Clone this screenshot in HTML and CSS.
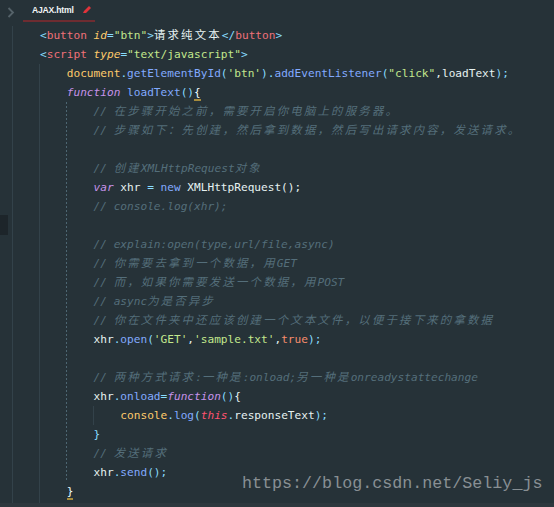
FILE: index.html
```html
<!DOCTYPE html>
<html>
<head>
<meta charset="utf-8">
<link rel="stylesheet" href="styles.css">
</head>
<body>
<div class="editor">
  <div class="tabbar">
    <svg class="chev" width="8" height="11" viewBox="0 0 8 11"><path d="M1.5 1 L6 5.5 L1.5 10" fill="none" stroke="#55636a" stroke-width="1.8"/></svg>
    <div class="tab">
      <span class="tabname">AJAX.html</span>
      <svg class="pencil" width="10" height="9" viewBox="0 0 10 9"><path d="M1 8 L2 6 L7 1 L9 3 L4 8 Z" fill="#e0333a"/></svg>
    </div>
  </div>
  <div class="codewrap">
    <div class="guide g0"></div>
    <div class="guide g1"></div>
    <div class="guide g2"></div>
    <div class="guide g3"></div>
    <div class="curline"></div>
<pre class="code">    <span class="p">&lt;</span><span class="tg">button</span> <span class="at">id</span><span class="p">=</span><span class="s">"btn"</span><span class="p">&gt;</span><span class="cj">请求纯文本</span><span class="p">&lt;/</span><span class="tg">button</span><span class="p">&gt;</span>
    <span class="p">&lt;</span><span class="tg">script</span> <span class="at">type</span><span class="p">=</span><span class="s">"text/javascript"</span><span class="p">&gt;</span>
        <span class="v">document</span><span class="p">.</span><span class="f">getElementById</span><span class="p">(</span><span class="s">'btn'</span><span class="p">).</span><span class="f">addEventListener</span><span class="p">(</span><span class="s">"click"</span>,loadText<span class="p">);</span>
        <span class="k">function</span> <span class="f">loadText</span><span class="p">()</span><span class="br">{</span>
            <span class="c">// <span class="cj">在步骤开始之前，需要开启你电脑上的服务器。</span></span>
            <span class="c">// <span class="cj">步骤如下：先创建，然后拿到数据，然后写出请求内容，发送请求。</span></span>

            <span class="c">// <span class="cj">创建</span>XMLHttpRequest<span class="cj">对象</span></span>
            <span class="k">var</span> xhr <span class="p">=</span> <span class="f">new</span> XMLHttpRequest();
            <span class="c">// console.log(xhr);</span>

            <span class="c">// explain:open(type,url/file,async)</span>
            <span class="c">// <span class="cj">你需要去拿到一个数据，用</span>GET</span>
            <span class="c">// <span class="cj">而，如果你需要发送一个数据，用</span>POST</span>
            <span class="c">// async<span class="cj">为是否异步</span></span>
            <span class="c">// <span class="cj">你在文件夹中还应该创建一个文本文件，以便于接下来的拿数据</span></span>
            xhr<span class="p">.</span><span class="f">open</span><span class="p">(</span><span class="s">'GET'</span>,<span class="s">'sample.txt'</span>,<span class="n">true</span><span class="p">);</span>

            <span class="c">// <span class="cj">两种方式请求</span>:<span class="cj">一种是</span>:onload;<span class="cj">另一种是</span>onreadystattechange</span>
            xhr<span class="p">.</span><span class="f">onload</span><span class="p">=</span><span class="k">function</span><span class="p">()</span>{
                <span class="v">console</span><span class="p">.</span><span class="f">log</span><span class="p">(</span><span class="th">this</span><span class="p">.</span>responseText<span class="p">);</span>
            <span class="p">}</span>
            <span class="c">// <span class="cj">发送请求</span></span>
            xhr<span class="p">.</span><span class="f">send</span><span class="p">();</span>
        <span class="br">}</span></pre>
    <div class="watermark">https://blog.csdn.net/Seliy_js</div>
  </div>
  <div class="bottom"></div>
</div>
</body>
</html>
```
FILE: styles.css
```css
html, body {
  margin: 0;
  padding: 0;
  background: #263238;
}
.editor {
  width: 554px;
  height: 507px;
  overflow: hidden;
  background: #263238;
  display: flex;
  flex-direction: column;
}
.tabbar {
  height: 26px;
  flex: none;
  display: flex;
  align-items: flex-start;
}
.chev {
  margin: 7px 0 0 7px;
}
.tab {
  margin-left: 8px;
  width: 72px;
  height: 22px;
  border-bottom: 2px solid #6e2c31;
  display: flex;
  align-items: center;
  padding-left: 9px;
  box-sizing: border-box;
}
.tabname {
  font-family: "Liberation Sans", Arial, sans-serif;
  font-weight: bold;
  font-size: 8.6px;
  color: #f2f5f6;
  letter-spacing: -0.2px;
  margin-top: -1px;
}
.pencil {
  margin-left: 8px;
  margin-top: -1px;
}
.codewrap {
  position: relative;
  flex: 1;
}
.code {
  margin: 0;
  padding: 0 0 0 13.2px;
  font-family: "DejaVu Sans Mono", "Noto Sans CJK SC", monospace;
  font-size: 11.13px;
  line-height: 19px;
  color: #e6f2f2;
  white-space: pre;
  position: relative;
}
.cj {
  font-family: "Noto Sans CJK SC", sans-serif;
  font-size: 11.4px;
  line-height: 10px;
  letter-spacing: 2.2px;
}
.p { color: #89ddff; }
.tg { color: #f07178; }
.at { color: #ffcb6b; font-style: italic; }
.s { color: #c3e88d; }
.v { color: #ffcb6b; }
.f { color: #82aaff; }
.k { color: #c792ea; font-style: italic; }
.n { color: #f78c6c; }
.th { color: #ff5370; font-style: italic; }
.c { color: #546e7a; font-style: italic; }
.br {
  color: #eeffff;
  border-bottom: 2px solid #a68b3c;
}
.guide {
  position: absolute;
  width: 1px;
}
.g0 {
  left: 12px;
  top: 0;
  bottom: 0;
  background: #33424a;
}
.g1 {
  left: 39px;
  top: 38px;
  bottom: 0;
  background: #33424a;
}
.g2 {
  left: 66px;
  top: 76px;
  height: 380px;
  background: repeating-linear-gradient(to bottom, #4d6672 0 2px, transparent 2px 4px);
}
.g3 {
  left: 93px;
  top: 380px;
  height: 19px;
  background: #33424a;
}
.curline {
  position: absolute;
  left: 0;
  top: 189px;
  width: 8px;
  height: 20px;
  background: #1d252a;
}
.watermark {
  position: absolute;
  left: 242px;
  top: 448px;
  font-family: "Liberation Mono", monospace;
  font-size: 16.7px;
  line-height: 20px;
  color: #9aa0a4;
  opacity: 0.85;
}
.bottom {
  height: 4px;
  flex: none;
  background: #2d373d;
}
```
